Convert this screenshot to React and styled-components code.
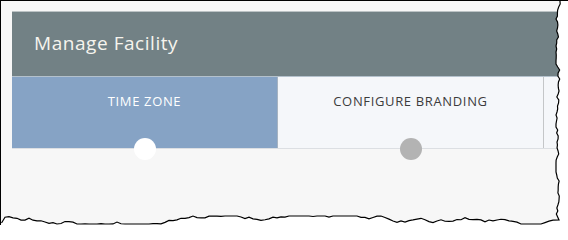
import React from "react";
import styled, { createGlobalStyle } from "styled-components";

const Global = createGlobalStyle`
  html, body { margin: 0; padding: 0; background: #ffffff; }
  body { font-family: "Open Sans", "Liberation Sans", sans-serif; }
`;

const Frame = styled.div`
  position: relative;
  width: 568px;
  height: 225px;
  box-sizing: border-box;
  background: #f7f7f7;
  border-top: 1px solid #000;
  border-left: 1px solid #000;
  padding: 10px 0 0 11px;
  overflow: hidden;
`;

const Panel = styled.div`
  width: 600px;
  display: flex;
  flex-direction: column;
`;

const Header = styled.div`
  height: 64px;
  background: #728185;
  border-top: 1px solid #bcc3c5;
  display: flex;
  align-items: center;
  padding-left: 22px;
  padding-bottom: 3px;
  box-sizing: border-box;
  height: 65px;
`;

const Title = styled.h1`
  margin: 0;
  font-family: "Open Sans", sans-serif;
  font-weight: 400;
  font-size: 19px;
  letter-spacing: 0.55px;
  color: #f6f4ee;
`;

const TabRow = styled.div`
  display: flex;
  border-top: 1px solid #b4c1cc;
  border-bottom: 1px solid #dcdfe3;
  background: #f5f7fa;
`;

const Tab = styled.div`
  position: relative;
  flex: 0 0 ${(p) => p.$w}px;
  height: 71px;
  box-sizing: border-box;
  background: ${(p) => (p.$active ? "#86a3c5" : "#f5f7fa")};
  border-right: 1px solid ${(p) => (p.$active ? "#a6b3c1" : "#c4c6c8")};
  display: flex;
  justify-content: center;
  padding-top: 16px;
`;

const TabLabel = styled.span`
  font-family: "Open Sans", sans-serif;
  font-size: 13px;
  line-height: 16px;
  letter-spacing: 0.65px;
  color: ${(p) => (p.$active ? "#ffffff" : "#3c3c3c")};
`;

const Dot = styled.span`
  position: absolute;
  left: 50%;
  bottom: -12px;
  width: 22px;
  height: 22px;
  margin-left: -11px;
  border-radius: 50%;
  background: ${(p) => (p.$active ? "#ffffff" : "#b3b3b3")};
  z-index: 2;
`;

const Torn = styled.svg`
  position: absolute;
  left: 0;
  top: 0;
  width: 568px;
  height: 225px;
  z-index: 5;
  pointer-events: none;
`;

function tornPath() {
  let seed = 7;
  const rnd = () => {
    seed = (seed * 9301 + 49297) % 233280;
    return seed / 233280;
  };
  const pts = [];
  let x = 559;
  for (let y = 0; y <= 214; y += 3) {
    x = Math.max(555, Math.min(563, x + (rnd() - 0.5) * 4));
    pts.push([x, y]);
  }
  pts.push([558, 219]);
  let y = 220;
  for (let xx = 552; xx >= 1; xx -= 4) {
    y = Math.max(215, Math.min(223, y + (rnd() - 0.5) * 4));
    pts.push([xx, y]);
  }
  pts.push([0.5, 222]);
  return pts;
}

function TornEdge() {
  const pts = tornPath();
  const line = pts.map((p) => p.join(",")).join(" ");
  const fill = `568,0 ${line} 0,225 568,225`;
  return (
    <Torn viewBox="0 0 568 225">
      <polygon points={fill} fill="#ffffff" />
      <polyline points={line} fill="none" stroke="#000" strokeWidth="1.2" />
    </Torn>
  );
}

export default function App() {
  return (
    <>
      <Global />
      <Frame>
        <Panel>
          <Header>
            <Title>Manage Facility</Title>
          </Header>
          <TabRow>
            <Tab $active $w={266}>
              <TabLabel $active>TIME ZONE</TabLabel>
              <Dot $active />
            </Tab>
            <Tab $w={266}>
              <TabLabel>CONFIGURE BRANDING</TabLabel>
              <Dot />
            </Tab>
            <Tab $w={66} />
          </TabRow>
        </Panel>
        <TornEdge />
      </Frame>
    </>
  );
}
